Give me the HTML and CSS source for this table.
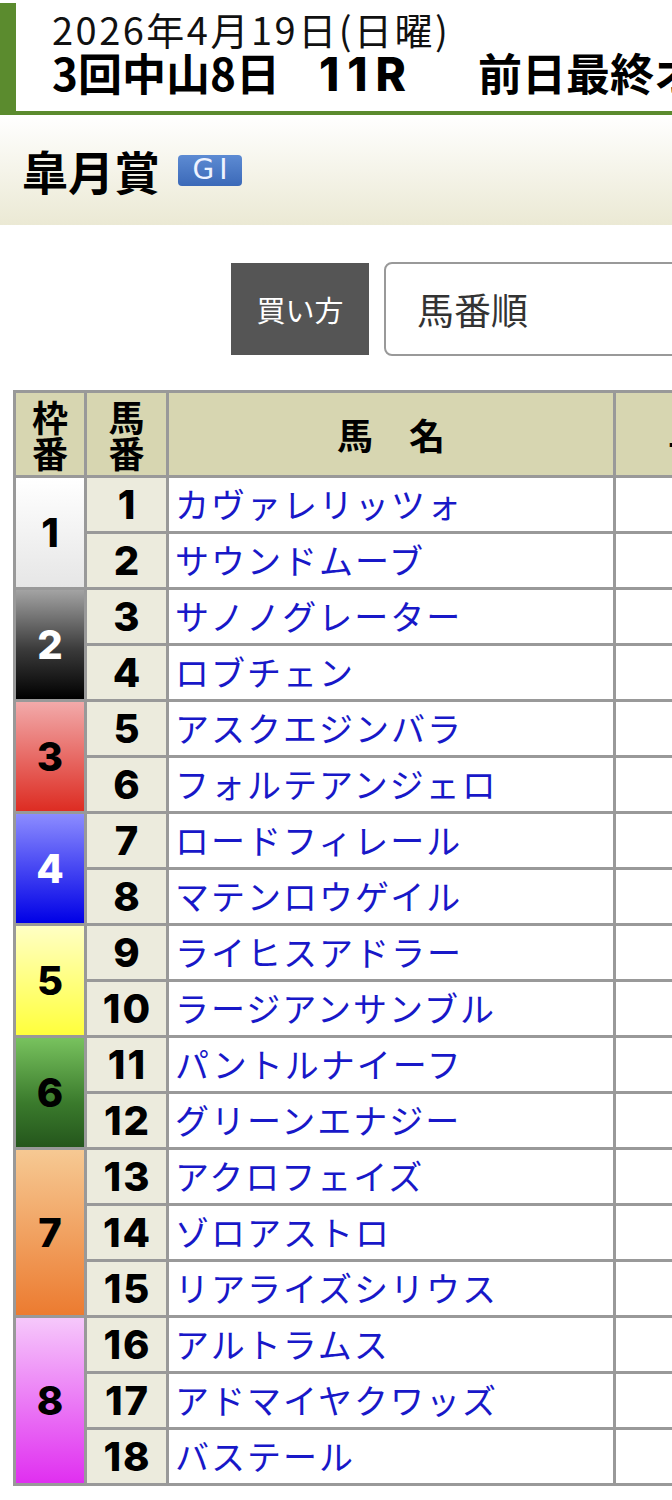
FILE: index.html
```html
<!DOCTYPE html>
<html lang="ja">
<head>
<meta charset="utf-8">
<title>皐月賞 オッズ</title>
<link rel="stylesheet" href="styles.css">
</head>
<body>
<div class="page">
  <header class="race-head">
    <div class="date">2026年4月19日(日曜)</div>
    <div class="race">3回中山8日　<span class="rno">11R</span>　前日最終オッズ</div>
  </header>
  <section class="race-title">
    <h1 class="race-name">皐月賞</h1>
    <span class="grade">GⅠ</span>
  </section>
  <div class="controls">
    <span class="btn-label">買い方</span>
    <div class="select">馬番順</div>
  </div>
  <table class="odds">
    <colgroup>
      <col class="c-waku"><col class="c-num"><col class="c-name"><col class="c-odds">
    </colgroup>
    <thead>
      <tr>
        <th>枠<br>番</th>
        <th>馬<br>番</th>
        <th>馬　名</th>
        <th class="th-odds">単勝オッズ</th>
      </tr>
    </thead>
    <tbody>
      <tr><td class="waku w1" rowspan="2">1</td><td class="num">1</td><td class="name">カヴァレリッツォ</td><td class="blank"></td></tr>
      <tr><td class="num">2</td><td class="name">サウンドムーブ</td><td class="blank"></td></tr>
      <tr><td class="waku w2" rowspan="2">2</td><td class="num">3</td><td class="name">サノノグレーター</td><td class="blank"></td></tr>
      <tr><td class="num">4</td><td class="name">ロブチェン</td><td class="blank"></td></tr>
      <tr><td class="waku w3" rowspan="2">3</td><td class="num">5</td><td class="name">アスクエジンバラ</td><td class="blank"></td></tr>
      <tr><td class="num">6</td><td class="name">フォルテアンジェロ</td><td class="blank"></td></tr>
      <tr><td class="waku w4" rowspan="2">4</td><td class="num">7</td><td class="name">ロードフィレール</td><td class="blank"></td></tr>
      <tr><td class="num">8</td><td class="name">マテンロウゲイル</td><td class="blank"></td></tr>
      <tr><td class="waku w5" rowspan="2">5</td><td class="num">9</td><td class="name">ライヒスアドラー</td><td class="blank"></td></tr>
      <tr><td class="num">10</td><td class="name">ラージアンサンブル</td><td class="blank"></td></tr>
      <tr><td class="waku w6" rowspan="2">6</td><td class="num">11</td><td class="name">パントルナイーフ</td><td class="blank"></td></tr>
      <tr><td class="num">12</td><td class="name">グリーンエナジー</td><td class="blank"></td></tr>
      <tr><td class="waku w7" rowspan="3">7</td><td class="num">13</td><td class="name">アクロフェイズ</td><td class="blank"></td></tr>
      <tr><td class="num">14</td><td class="name">ゾロアストロ</td><td class="blank"></td></tr>
      <tr><td class="num">15</td><td class="name">リアライズシリウス</td><td class="blank"></td></tr>
      <tr><td class="waku w8" rowspan="3">8</td><td class="num">16</td><td class="name">アルトラムス</td><td class="blank"></td></tr>
      <tr><td class="num">17</td><td class="name">アドマイヤクワッズ</td><td class="blank"></td></tr>
      <tr><td class="num">18</td><td class="name">バステール</td><td class="blank"></td></tr>
    </tbody>
  </table>
</div>
</body>
</html>
```
FILE: styles.css
```css
html, body {
  margin: 0;
  padding: 0;
  background: #fff;
}
body {
  font-family: "Noto Sans CJK JP", "Noto Sans", sans-serif;
  color: #000;
}
.page {
  width: 672px;
  overflow: hidden;
  padding-bottom: 14px;
}

/* race header */
.race-head {
  margin-top: 3px;
  box-sizing: border-box;
  height: 112px;
  border-left: 16px solid #5b8b2e;
  border-bottom: 4px solid #5b8b2e;
  padding: 0 0 8px 36px;
  display: flex;
  flex-direction: column;
  justify-content: center;
  white-space: nowrap;
}
.date {
  font-size: 38px;
  line-height: 40px;
  letter-spacing: 2.5px;
  color: #111;
}
.race {
  font-size: 44px;
  font-weight: 700;
  line-height: 46px;
}
.rno {
  font-family: "Inter", "Noto Sans CJK JP", sans-serif;
  font-size: 46px;
  font-weight: 800;
  letter-spacing: 8px;
  margin-left: -5px;
  margin-right: 20px;
}

/* race title */
.race-title {
  height: 110px;
  background: linear-gradient(#ffffff, #ebe9d4);
  display: flex;
  align-items: center;
  padding-left: 22px;
}
.race-name {
  margin: 0;
  font-size: 46px;
  font-weight: 700;
  line-height: 1;
}
.grade {
  margin-left: 18px;
  width: 64px;
  height: 31px;
  border-radius: 4px;
  background: linear-gradient(#5d8bd3, #3b69b8);
  color: #eef3ff;
  font-family: "DejaVu Sans", sans-serif;
  font-size: 28px;
  line-height: 1;
  letter-spacing: 5px;
  text-indent: 5px;
  display: flex;
  align-items: center;
  justify-content: center;
}

/* controls */
.controls {
  display: flex;
  align-items: center;
  gap: 15px;
  margin-top: 37px;
  padding-left: 231px;
}
.btn-label {
  flex: none;
  width: 138px;
  height: 92px;
  background: #555;
  color: #fff;
  font-size: 29px;
  display: flex;
  align-items: center;
  justify-content: center;
}
.select {
  flex: none;
  box-sizing: border-box;
  width: 420px;
  height: 94px;
  border: 2px solid #999;
  border-radius: 8px;
  padding-left: 31px;
  font-size: 37px;
  color: #333;
  display: flex;
  align-items: center;
}

/* odds table */
.odds {
  margin: 34px 0 0 13px;
  border-collapse: separate;
  border-spacing: 3px;
  background: #999;
  table-layout: fixed;
  width: 849px;
}
.c-waku { width: 68px; }
.c-num { width: 79px; }
.c-name { width: 444px; }
.c-odds { width: 243px; }
.odds th,
.odds td {
  padding: 0;
}
.odds th {
  height: 82px;
  background: #d7d6b1;
  font-size: 36px;
  font-weight: 700;
  line-height: 36px;
  text-align: center;
}
.odds .th-odds {
  text-align: left;
  padding-left: 52px;
  white-space: nowrap;
}
.odds td {
  height: 53px;
  line-height: 1.2;
}
.num {
  background: #ecebdd;
  font-family: "Inter", "Noto Sans CJK JP", sans-serif;
  font-size: 40px;
  font-weight: 800;
  letter-spacing: 2px;
  text-indent: 2px;
  text-align: center;
}
.name {
  background: #fff;
  color: #1818c8;
  font-size: 34px;
  letter-spacing: 2px;
  padding-left: 6px !important;
  white-space: nowrap;
}
.blank {
  background: #fff;
}
.waku {
  font-family: "Inter", "Noto Sans CJK JP", sans-serif;
  font-size: 40px;
  font-weight: 800;
  text-align: center;
}
.w1 { background: linear-gradient(#ffffff, #e6e6e6); color: #000; }
.w2 { background: linear-gradient(#a3a3a3, #3a3a3a 55%, #000); color: #fff; }
.w3 { background: linear-gradient(#f2aaaa, #dd2c22); color: #000; }
.w4 { background: linear-gradient(#8c8cff, #0000e6); color: #fff; }
.w5 { background: linear-gradient(#ffffc4, #ffff3c); color: #000; }
.w6 { background: linear-gradient(#78c25e, #3a7a2c 60%, #24561c); color: #000; }
.w7 { background: linear-gradient(#f6c993, #ec7b30); color: #000; }
.w8 { background: linear-gradient(#f6c8fb, #e02ff0); color: #000; }
```
